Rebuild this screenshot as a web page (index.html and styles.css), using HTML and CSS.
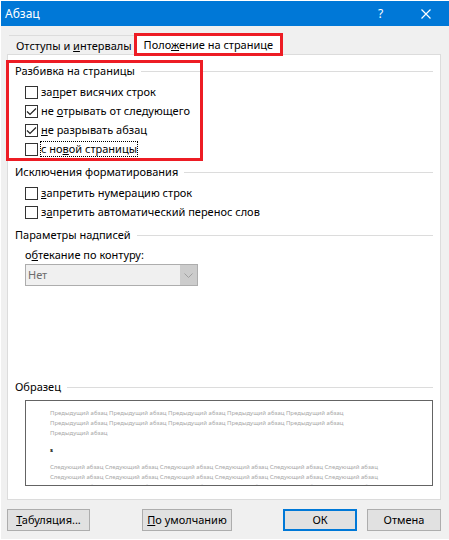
FILE: index.html
```html
<!DOCTYPE html>
<html lang="ru">
  <head>
    <meta charset="UTF-8" />
    <meta name="viewport" content="width=device-width, initial-scale=1.0" />
    <title>Абзац</title>
    <link rel="stylesheet" href="styles.css">
  </head>
  <body>
    <form class="dialog">
      <header class="title-bar">
        <h1>Абзац</h1>
        <button type="button" class="title-button">?</button>
        <button type="button" class="title-button" aria-label="Закрыть">
          <svg width="10" height="10" viewBox="0 0 10 10">
            <path d="M0.5 0.5L9.5 9.5M9.5 0.5L0.5 9.5" fill="none" stroke="#fff" stroke-width="1.2" />
          </svg>
        </button>
      </header>

      <div class="tabs" role="tablist">
        <button type="button" class="tab" role="tab">Отступы и <u>и</u>нтервалы</button>
        <button type="button" class="tab active" role="tab" aria-selected="true">Поло<u>ж</u>ение на странице</button>
      </div>

      <main class="panel">
        <section class="group marked">
          <h2>Разбивка на страницы</h2>
          <div class="checks">
            <label class="check"><input type="checkbox"><span>за<u>п</u>рет висячих строк</span></label>
            <label class="check"><input type="checkbox" checked><span>не <u>о</u>трывать от следующего</span></label>
            <label class="check"><input type="checkbox" checked><span><u>н</u>е разрывать абзац</span></label>
            <label class="check focused"><input type="checkbox"><span>с но<u>в</u>ой страницы</span></label>
          </div>
        </section>

        <section class="group">
          <h2>Исключения форматирования</h2>
          <div class="checks">
            <label class="check"><input type="checkbox"><span><u>з</u>апретить нумерацию строк</span></label>
            <label class="check"><input type="checkbox"><span>з<u>а</u>претить автоматический перенос слов</span></label>
          </div>
        </section>

        <section class="group wrapping">
          <h2>Параметры надписей</h2>
          <div class="field">
            <label for="wrap">о<u>б</u>текание по контуру:</label>
            <div class="select">
              <select id="wrap" disabled>
                <option>Нет</option>
              </select>
              <svg width="9" height="5" viewBox="0 0 9 5">
                <path d="M0.5 0.5L4.5 4.5L8.5 0.5" fill="none" stroke="#a0a0a0" />
              </svg>
            </div>
          </div>
        </section>

        <section class="group">
          <h2>Образец</h2>
          <div class="preview">
            <p>Предыдущий&nbsp;абзац Предыдущий&nbsp;абзац Предыдущий&nbsp;абзац Предыдущий&nbsp;абзац Предыдущий&nbsp;абзац Предыдущий&nbsp;абзац Предыдущий&nbsp;абзац Предыдущий&nbsp;абзац Предыдущий&nbsp;абзац Предыдущий&nbsp;абзац Предыдущий&nbsp;абзац</p>
            <p class="current">s</p>
            <p>Следующий&nbsp;абзац Следующий&nbsp;абзац Следующий&nbsp;абзац Следующий&nbsp;абзац Следующий&nbsp;абзац Следующий&nbsp;абзац Следующий&nbsp;абзац Следующий&nbsp;абзац Следующий&nbsp;абзац Следующий&nbsp;абзац Следующий&nbsp;абзац Следующий&nbsp;абзац Следующий&nbsp;абзац Следующий&nbsp;абзац Следующий&nbsp;абзац Следующий&nbsp;абзац Следующий&nbsp;абзац Следующий&nbsp;абзац</p>
          </div>
        </section>
      </main>

      <footer class="buttons">
        <button type="button" class="button tabulation"><u>Т</u>абуляция...</button>
        <button type="button" class="button defaults"><u>П</u>о умолчанию</button>
        <button type="submit" class="button primary">ОК</button>
        <button type="button" class="button">Отмена</button>
      </footer>
    </form>
  </body>
</html>
```
FILE: styles.css
```css
*,
*::before {
  box-sizing: border-box;
}
body {
  margin: 0;
  background: #fff;
  color: #000;
  font-family: "Noto Sans", "Open Sans", sans-serif;
  font-size: 11px;
  line-height: 16px;
}
h1,
h2,
p {
  margin: 0;
  font-size: 11px;
  font-weight: normal;
}
button,
select {
  font: inherit;
  color: inherit;
}
.dialog {
  display: flex;
  flex-direction: column;
  min-height: calc(100vh - 2px);
  margin: 1px 0 1px 1px;
  background: #f0f0f0;
}

/* Title bar */
.title-bar {
  display: flex;
  align-items: center;
  height: 25px;
  padding: 0 1px 0 4px;
  background: #0078d7;
  color: #fff;
  font-size: 12px;
}
.title-bar h1 {
  flex: 1;
  font-size: 12px;
}
.title-button {
  display: flex;
  align-items: center;
  justify-content: center;
  width: 45px;
  height: 25px;
  padding: 0;
  border: none;
  background: none;
}

/* Tabs */
.tabs {
  display: flex;
  align-items: flex-end;
  margin-top: 7px;
  padding-left: 8px;
}
.tab {
  height: 19px;
  padding: 2px 2px 0 7px;
  border: none;
  border-top: 1px solid #dcdcdc;
  background: none;
  white-space: nowrap;
}
.tab.active {
  position: relative;
  height: 23px;
  margin-bottom: -2px;
  padding: 0 7px;
  border: 3px solid #ed1c24;
  background: #fff;
}

/* Panel */
.panel {
  display: flex;
  flex: 1;
  flex-direction: column;
  gap: 2px;
  margin: 0 8px 0 6px;
  padding: 8px 7px 13px;
  border: 1px solid #dcdcdc;
  background: #fff;
}
.group {
  position: relative;
}
.group h2 {
  display: flex;
  align-items: center;
  gap: 6px;
}
.group h2::after {
  content: "";
  flex: 1;
  height: 1px;
  background: #dcdcdc;
}
.marked::before {
  content: "";
  position: absolute;
  top: -3px;
  left: -9px;
  width: 197px;
  height: 101px;
  border: 3px solid #ed1c24;
}
.wrapping {
  flex: 1;
}
.checks {
  display: flex;
  flex-direction: column;
  align-items: flex-start;
  gap: 3px;
  padding: 5px 0 5px 10px;
}
.check {
  display: flex;
  align-items: center;
  gap: 2px;
}
.check input {
  appearance: none;
  width: 13px;
  height: 13px;
  margin: 0;
  border: 1px solid #333;
  background: #fff;
}
.check input:checked {
  background: #fff url("data:image/svg+xml,%3Csvg xmlns='http://www.w3.org/2000/svg' viewBox='0 0 11 11'%3E%3Cpath d='M1 5.5L4 8.5L10 2.5' fill='none' stroke='%23222' stroke-width='1.2'/%3E%3C/svg%3E");
}
.check span {
  padding: 0 1px;
}
.focused span {
  outline: 1px dotted #000;
  outline-offset: -1px;
}
.field {
  padding: 4px 0 0 10px;
}
.field label {
  display: block;
}
.select {
  display: flex;
  align-items: center;
  position: relative;
  width: 173px;
  margin-top: 1px;
}
.select select {
  appearance: none;
  width: 100%;
  height: 22px;
  padding: 0 2px;
  border: 1px solid #adadad;
  border-radius: 0;
  background: linear-gradient(#cccccc, #cccccc) right / 17px 100% no-repeat #f0f0f0;
  color: #6d6d6d;
  opacity: 1;
}
.select svg {
  position: absolute;
  right: 5px;
}

/* Sample text */
.preview {
  height: 86px;
  margin: 5px 0 0 10px;
  padding: 7px 34px 0 24px;
  border: 1px solid #646464;
  overflow: hidden;
  color: #a8a8a8;
}
.preview p {
  font-size: 6px;
  line-height: 10px;
}
.preview .current {
  margin: 7px 0;
  color: #000;
  font-weight: bold;
}

/* Footer */
.buttons {
  display: flex;
  gap: 10px;
  padding: 9px 8px 8px 6px;
}
.button {
  min-width: 74px;
  height: 22px;
  padding: 0;
  border: 1px solid #adadad;
  background: #e1e1e1;
}
.tabulation {
  width: 83px;
  margin-right: auto;
}
.defaults {
  width: 90px;
  margin-right: 41px;
}
.primary {
  border: 2px solid #0078d7;
}
```
